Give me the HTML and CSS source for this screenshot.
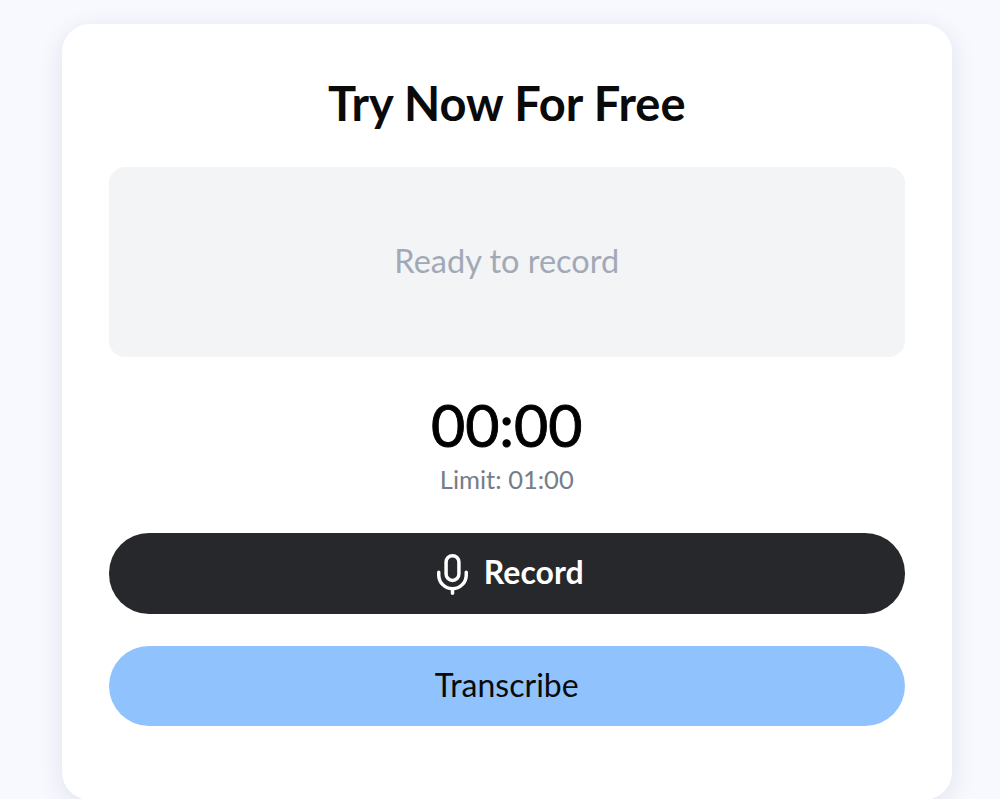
FILE: index.html
```html
<!DOCTYPE html>
<html>
  <head>
    <meta charset="utf-8">
    <title>Try Now For Free</title>
    <link rel="stylesheet" href="styles.css">
  </head>
  <body>
    <div class="card">
      <h2 class="title">Try Now For Free</h2>
      <div class="preview">Ready to record</div>
      <div class="timer">00:00</div>
      <div class="limit">Limit: 01:00</div>
      <button class="btn btnRecord">
        <svg class="mic" viewBox="0 0 36 44" width="33" height="44" fill="none" stroke="#fff" stroke-width="3.8" stroke-linecap="round" stroke-linejoin="round">
          <rect x="11" y="2" width="14" height="27" rx="7"></rect>
          <path d="M3 20v3a15 15 0 0 0 30 0v-3"></path>
          <path d="M18 38v5"></path>
        </svg>
        <span class="btnLabel">Record</span>
      </button>
      <button class="btn btnTranscribe"><span class="btnLabel">Transcribe</span></button>
    </div>
  </body>
</html>
```

FILE: styles.css
```css
html, body {
  margin: 0;
  height: 100%;
  overflow: hidden;
}
body {
  background-color: #f8f9ff;
  font-family: "Lato", "Liberation Sans", sans-serif;
  padding: 24px 48px 0 62px;
  box-sizing: border-box;
}
.card {
  background-color: #fff;
  border-radius: 28px;
  box-shadow: 0 6px 26px rgba(20, 30, 60, 0.1);
  padding: 48px 47.5px 56px 47px;
  height: 776px;
  box-sizing: border-box;
  display: flex;
  flex-direction: column;
}
.title {
  margin: 0;
  height: 62px;
  line-height: 62px;
  font-size: 47px;
  font-weight: 700;
  color: #0a0a0a;
  text-align: center;
}
.preview {
  margin-top: 33px;
  height: 190px;
  padding-bottom: 4px;
  box-sizing: border-box;
  border-radius: 16px;
  background-color: #f3f4f6;
  color: #a2a9b6;
  font-size: 32.5px;
  display: flex;
  align-items: center;
  justify-content: center;
}
.timer {
  margin-top: 33px;
  height: 70px;
  line-height: 70px;
  font-size: 59px;
  font-weight: 400;
  -webkit-text-stroke: 0.9px #000;
  color: #000;
  text-align: center;
}
.limit {
  height: 37px;
  line-height: 38px;
  font-size: 25.5px;
  color: #767c8a;
  text-align: center;
}
.btn {
  border: 0;
  width: 100%;
  padding: 0;
  border-radius: 40px;
  font-family: inherit;
  font-size: 32px;
  display: flex;
  align-items: center;
  justify-content: center;
}
.btnLabel {
  padding-bottom: 4px;
}
.btnRecord {
  margin-top: 36px;
  height: 81px;
  padding-left: 6px;
  background-color: #27282c;
  color: #fff;
  font-weight: 700;
  gap: 15px;
}
.btnTranscribe {
  margin-top: 32px;
  height: 80px;
  background-color: #90c3fd;
  color: #0a0a0a;
  font-weight: 400;
}
.mic {
  display: block;
}
```
